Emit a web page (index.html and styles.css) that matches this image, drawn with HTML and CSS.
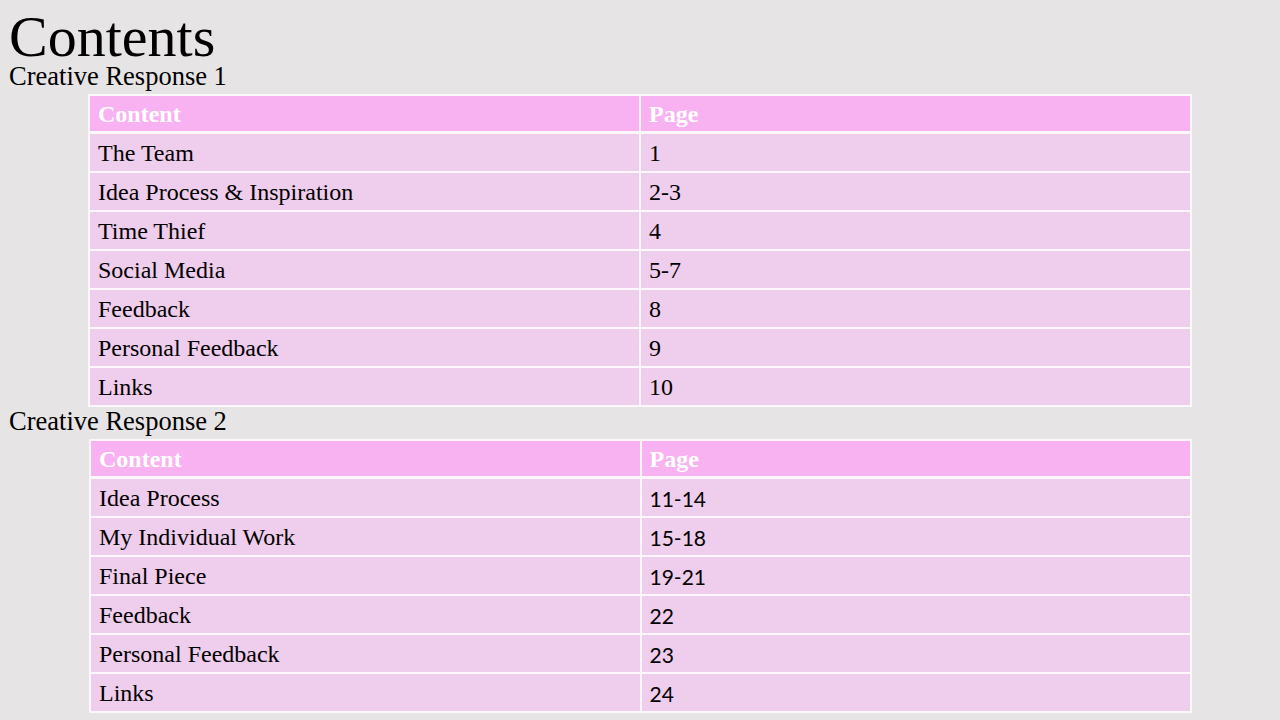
FILE: index.html
```html
<!DOCTYPE html>
<html>
<head>
<meta charset="utf-8">
<title>Contents</title>
<link rel="stylesheet" href="styles.css">
</head>
<body>
<h1 class="title">Contents</h1>
<h2 class="section first">Creative Response 1</h2>
<table class="toc">
  <thead>
    <tr><th>Content</th><th>Page</th></tr>
  </thead>
  <tbody>
    <tr><td>The Team</td><td>1</td></tr>
    <tr><td>Idea Process &amp; Inspiration</td><td>2-3</td></tr>
    <tr><td>Time Thief</td><td>4</td></tr>
    <tr><td>Social Media</td><td>5-7</td></tr>
    <tr><td>Feedback</td><td>8</td></tr>
    <tr><td>Personal Feedback</td><td>9</td></tr>
    <tr><td>Links</td><td>10</td></tr>
  </tbody>
</table>
<h2 class="section second">Creative Response 2</h2>
<table class="toc toc-two">
  <thead>
    <tr><th>Content</th><th>Page</th></tr>
  </thead>
  <tbody>
    <tr><td>Idea Process</td><td class="num">11-14</td></tr>
    <tr><td>My Individual Work</td><td class="num">15-18</td></tr>
    <tr><td>Final Piece</td><td class="num">19-21</td></tr>
    <tr><td>Feedback</td><td class="num">22</td></tr>
    <tr><td>Personal Feedback</td><td class="num">23</td></tr>
    <tr><td>Links</td><td class="num">24</td></tr>
  </tbody>
</table>
</body>
</html>
```

FILE: styles.css
```css
html, body {
  margin: 0;
  padding: 0;
  background: #e6e4e4;
}

body {
  padding: 0 8px;
  font-family: "Liberation Serif", "Times New Roman", serif;
  color: #000;
}

.title {
  margin: 0;
  padding-top: 12px;
  padding-left: 1px;
  font-size: 58px;
  line-height: 50px;
  font-weight: normal;
}

.section {
  margin: 0;
  padding-left: 1px;
  font-size: 26.5px;
  line-height: 28px;
  font-weight: normal;
}

.section.first {
  margin-bottom: 4px;
}

.section.second {
  margin-bottom: 4px;
}

.toc {
  margin-left: 80px;
  width: 1104px;
  border-collapse: collapse;
  table-layout: fixed;
  font-size: 24px;
}

.toc th,
.toc td {
  width: 50%;
  border: 2px solid #fbf7fa;
  padding: 0 8px;
  text-align: left;
  vertical-align: middle;
  white-space: nowrap;
}

.toc th {
  height: 34px;
  padding-top: 1px;
  background: #f9b2f1;
  color: #fff;
  font-weight: bold;
  border-bottom-width: 3px;
}

.toc td {
  height: 36px;
  padding-top: 1px;
  background: #efcdec;
}

.toc-two {
  margin-left: 81px;
  width: 1103px;
}

.toc td.num {
  font-family: Lato, "Open Sans", sans-serif;
  font-size: 21px;
}
```
